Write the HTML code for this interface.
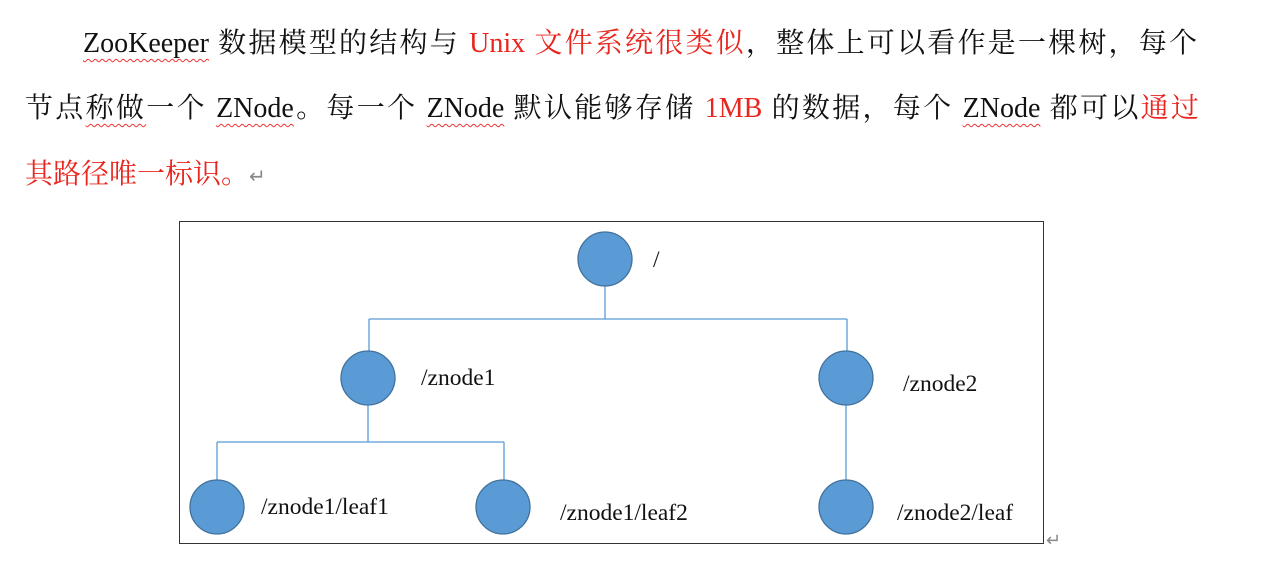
<!DOCTYPE html><html><head><meta charset="utf-8"><style>
body{margin:0;width:1274px;height:562px;background:#fff;overflow:hidden;position:relative;font-family:"Liberation Serif","Noto Serif CJK SC",serif;}
.l{position:absolute;font-size:28px;white-space:nowrap;text-align:justify;text-align-last:justify;color:#111;height:36px;line-height:36px}
.r{color:#e8251e}
.u{text-decoration:underline wavy #e33;text-underline-offset:6px;text-decoration-thickness:1px}
</style></head><body>
<div class="l" style="left:83px;top:26px;width:1114px"><span class="u">ZooKeeper</span> 数据模型的结构与 <span class="r">Unix 文件系统很类似</span>，整体上可以看作是一棵树，每个</div>
<div class="l" style="left:25px;top:91px;width:1174px">节点<span class="u">称做</span>一个 <span class="u">ZNode</span>。每一个 <span class="u">ZNode</span> 默认能够存储 <span class="r">1MB</span> 的数据，每个 <span class="u">ZNode</span> 都可以<span class="r">通过</span></div>
<div class="l r" style="left:25px;top:157px;text-align:left;text-align-last:left">其路径唯一标识。<span style="color:#888;font-size:20px">↵</span></div>
<svg style="position:absolute;left:0;top:0" width="1274" height="562">
<rect x="179.5" y="221.5" width="864" height="322" fill="none" stroke="#333" stroke-width="1"/>
<g stroke="#5b9bd5" stroke-width="1.3" fill="none">
<path d="M605 286V319M369 319H847M369 319V352M847 319V352M368 405V442M217 442H504M217 442V481M504 442V481M846 405V481"/>
</g>
<g fill="#5b9bd5" stroke="#41719c" stroke-width="1.3">
<circle cx="605" cy="259" r="27"/><circle cx="368" cy="378" r="27"/><circle cx="846" cy="378" r="27"/>
<circle cx="217" cy="507" r="27"/><circle cx="503" cy="507" r="27"/><circle cx="846" cy="507" r="27"/>
</g>
<g font-family="Liberation Serif,serif" font-size="23.5" fill="#111">
<text x="653" y="267">/</text><text x="421" y="385">/znode1</text><text x="903" y="391">/znode2</text>
<text x="261" y="514">/znode1/leaf1</text><text x="560" y="520">/znode1/leaf2</text><text x="897" y="520">/znode2/leaf</text>
</g>
<text x="1046" y="546" font-size="18" fill="#888">↵</text>
</svg>
</body></html>
